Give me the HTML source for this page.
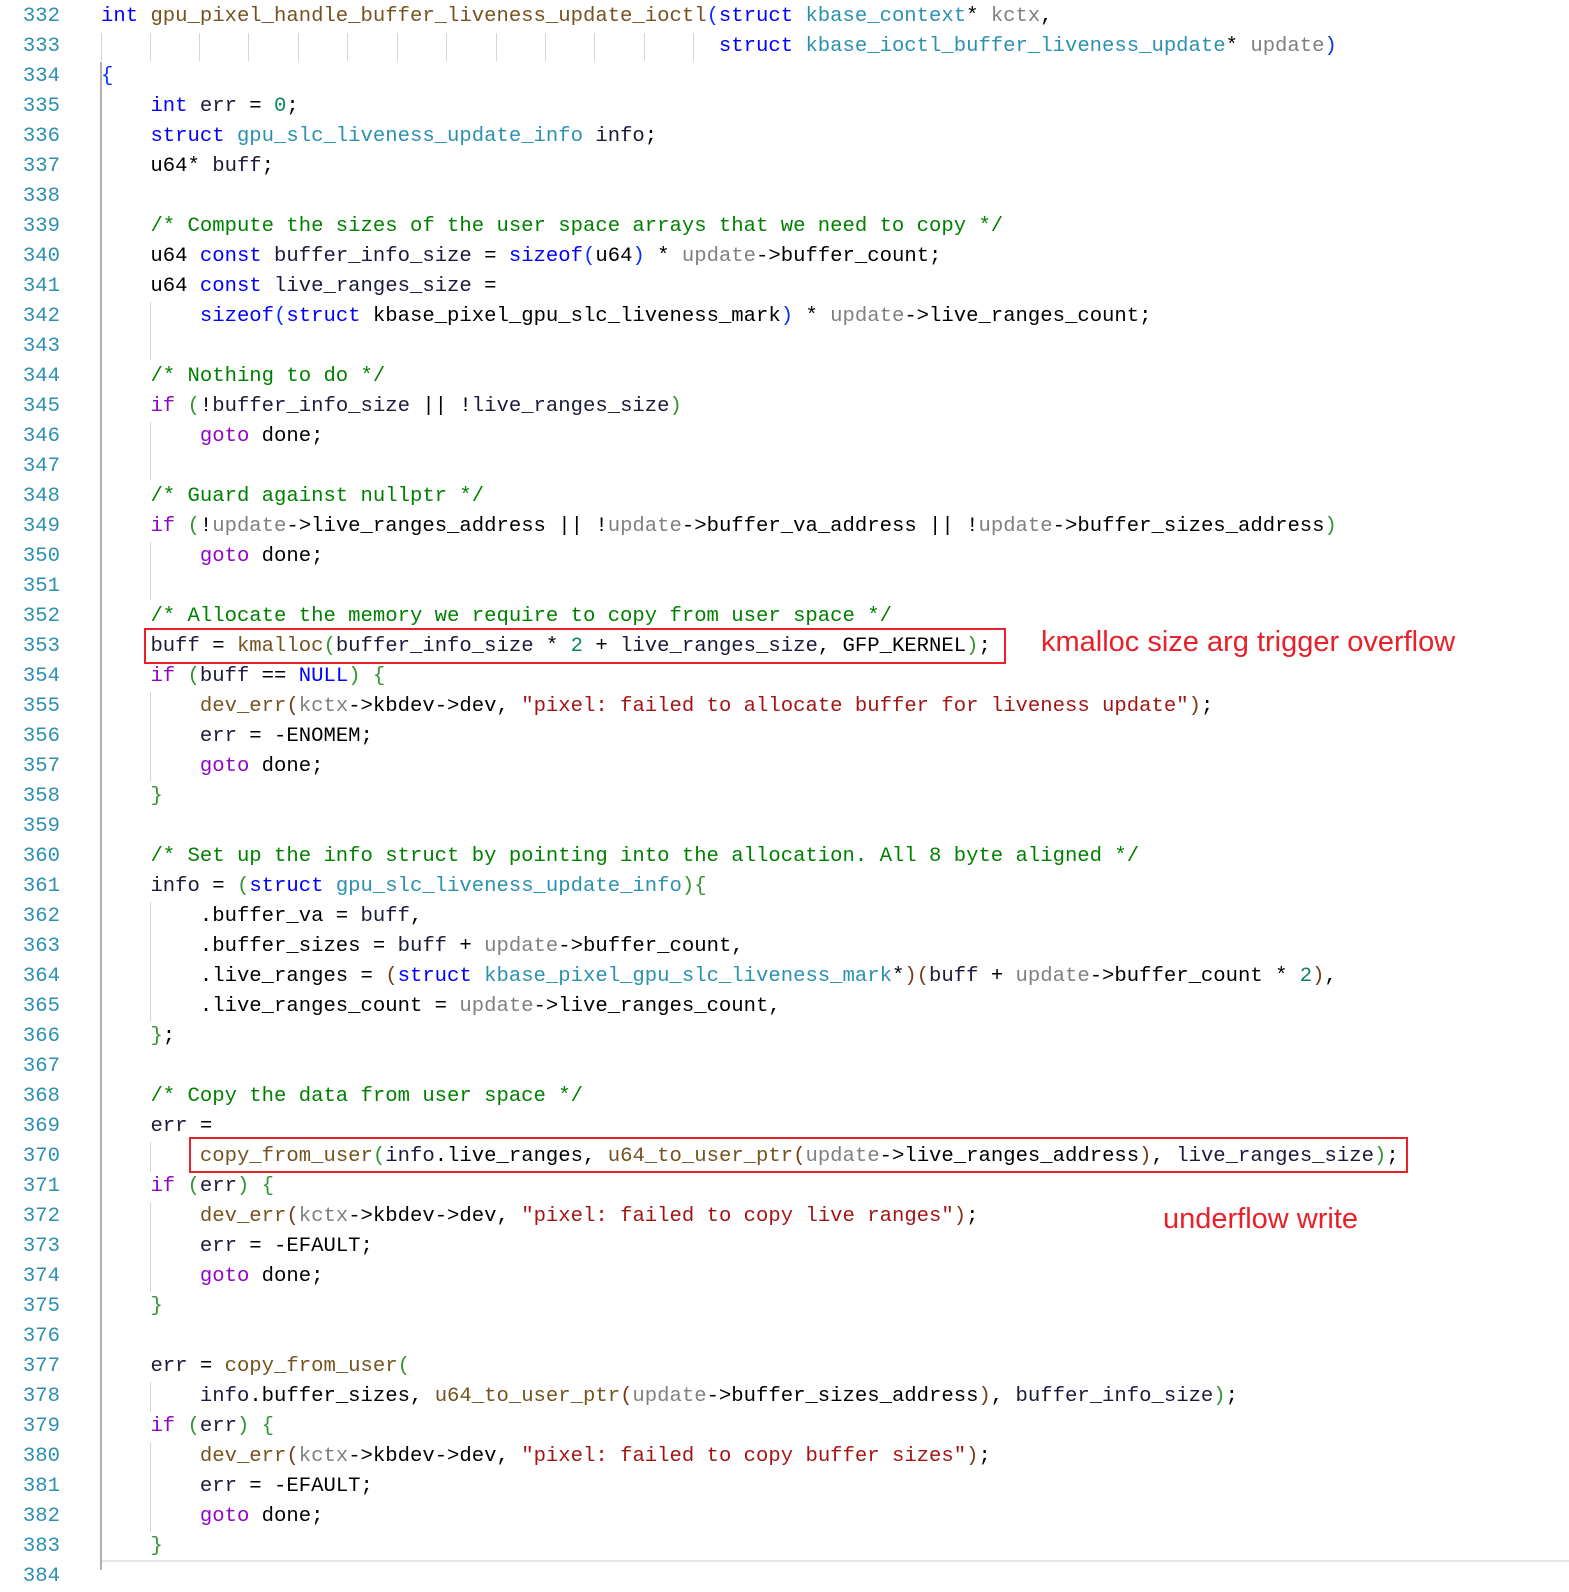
<!DOCTYPE html>
<html><head><meta charset="utf-8"><style>
body{margin:0;background:#fff;width:1569px;height:1570px;overflow:hidden;position:relative;font-family:"Liberation Mono",monospace;}
.ln{position:absolute;left:0;width:60px;text-align:right;color:#2b91af;font-size:20.6px;line-height:30px;}
.c{position:absolute;left:101px;white-space:pre;font-size:20.6px;line-height:30px;color:#000;}
.k{color:#0000ff}.cl{color:#8f08c4}.t{color:#2b91af}.f{color:#74531f}.v{color:#1a1a3a}.p{color:#808080}.m{color:#008000}.s{color:#a31515}.n{color:#098658}.b1{color:#0431fa}.b2{color:#319331}.b3{color:#7b3814}
.g{position:absolute;width:1px;background:#d6d6d6;}
.box{position:absolute;border:2px solid #e8202a;}
.ann{position:absolute;font-family:"Liberation Sans",sans-serif;color:#e8202a;font-size:29px;white-space:nowrap;}
</style></head><body>
<div style="position:absolute;left:100px;top:62px;width:2px;height:1508px;background:#b0b0b0"></div>
<div style="position:absolute;left:102px;top:1560px;width:1467px;height:2px;background:#e6e6e6"></div>
<div class="g" style="left:101px;top:33px;height:28px"></div>
<div class="g" style="left:150px;top:33px;height:28px"></div>
<div class="g" style="left:199px;top:33px;height:28px"></div>
<div class="g" style="left:248px;top:33px;height:28px"></div>
<div class="g" style="left:298px;top:33px;height:28px"></div>
<div class="g" style="left:347px;top:33px;height:28px"></div>
<div class="g" style="left:397px;top:33px;height:28px"></div>
<div class="g" style="left:446px;top:33px;height:28px"></div>
<div class="g" style="left:496px;top:33px;height:28px"></div>
<div class="g" style="left:545px;top:33px;height:28px"></div>
<div class="g" style="left:594px;top:33px;height:28px"></div>
<div class="g" style="left:644px;top:33px;height:28px"></div>
<div class="g" style="left:693px;top:33px;height:28px"></div>
<div class="g" style="left:150px;top:302px;height:58px"></div>
<div class="g" style="left:150px;top:422px;height:58px"></div>
<div class="g" style="left:150px;top:542px;height:58px"></div>
<div class="g" style="left:150px;top:692px;height:90px"></div>
<div class="g" style="left:150px;top:902px;height:120px"></div>
<div class="g" style="left:150px;top:1142px;height:30px"></div>
<div class="g" style="left:150px;top:1202px;height:90px"></div>
<div class="g" style="left:150px;top:1382px;height:30px"></div>
<div class="g" style="left:150px;top:1442px;height:90px"></div>

<div class="box" style="left:144px;top:628px;width:858px;height:32px"></div>
<div class="box" style="left:189px;top:1137px;width:1215px;height:32px"></div>
<div class="ann" style="left:1041px;top:626px">kmalloc size arg trigger overflow</div>
<div class="ann" style="left:1163px;top:1203px">underflow write</div>

<div class="ln" style="top:2px">332</div><div class="c" style="top:2px"><span class="k">int</span> <span class="f">gpu_pixel_handle_buffer_liveness_update_ioctl</span><span class="b1">(</span><span class="k">struct</span> <span class="t">kbase_context</span>* <span class="p">kctx</span>,</div>
<div class="ln" style="top:32px">333</div><div class="c" style="top:32px">                                                  <span class="k">struct</span> <span class="t">kbase_ioctl_buffer_liveness_update</span>* <span class="p">update</span><span class="b1">)</span></div>
<div class="ln" style="top:62px">334</div><div class="c" style="top:62px"><span class="b1">{</span></div>
<div class="ln" style="top:92px">335</div><div class="c" style="top:92px">    <span class="k">int</span> <span class="v">err</span> = <span class="n">0</span>;</div>
<div class="ln" style="top:122px">336</div><div class="c" style="top:122px">    <span class="k">struct</span> <span class="t">gpu_slc_liveness_update_info</span> <span class="v">info</span>;</div>
<div class="ln" style="top:152px">337</div><div class="c" style="top:152px">    u64* <span class="v">buff</span>;</div>
<div class="ln" style="top:182px">338</div>
<div class="ln" style="top:212px">339</div><div class="c" style="top:212px">    <span class="m">/* Compute the sizes of the user space arrays that we need to copy */</span></div>
<div class="ln" style="top:242px">340</div><div class="c" style="top:242px">    u64 <span class="k">const</span> <span class="v">buffer_info_size</span> = <span class="k">sizeof</span><span class="b1">(</span>u64<span class="b1">)</span> * <span class="p">update</span>-&gt;buffer_count;</div>
<div class="ln" style="top:272px">341</div><div class="c" style="top:272px">    u64 <span class="k">const</span> <span class="v">live_ranges_size</span> =</div>
<div class="ln" style="top:302px">342</div><div class="c" style="top:302px">        <span class="k">sizeof</span><span class="b1">(</span><span class="k">struct</span> kbase_pixel_gpu_slc_liveness_mark<span class="b1">)</span> * <span class="p">update</span>-&gt;live_ranges_count;</div>
<div class="ln" style="top:332px">343</div>
<div class="ln" style="top:362px">344</div><div class="c" style="top:362px">    <span class="m">/* Nothing to do */</span></div>
<div class="ln" style="top:392px">345</div><div class="c" style="top:392px">    <span class="cl">if</span> <span class="b2">(</span>!<span class="v">buffer_info_size</span> || !<span class="v">live_ranges_size</span><span class="b2">)</span></div>
<div class="ln" style="top:422px">346</div><div class="c" style="top:422px">        <span class="cl">goto</span> done;</div>
<div class="ln" style="top:452px">347</div>
<div class="ln" style="top:482px">348</div><div class="c" style="top:482px">    <span class="m">/* Guard against nullptr */</span></div>
<div class="ln" style="top:512px">349</div><div class="c" style="top:512px">    <span class="cl">if</span> <span class="b2">(</span>!<span class="p">update</span>-&gt;live_ranges_address || !<span class="p">update</span>-&gt;buffer_va_address || !<span class="p">update</span>-&gt;buffer_sizes_address<span class="b2">)</span></div>
<div class="ln" style="top:542px">350</div><div class="c" style="top:542px">        <span class="cl">goto</span> done;</div>
<div class="ln" style="top:572px">351</div>
<div class="ln" style="top:602px">352</div><div class="c" style="top:602px">    <span class="m">/* Allocate the memory we require to copy from user space */</span></div>
<div class="ln" style="top:632px">353</div><div class="c" style="top:632px">    <span class="v">buff</span> = <span class="f">kmalloc</span><span class="b2">(</span><span class="v">buffer_info_size</span> * <span class="n">2</span> + <span class="v">live_ranges_size</span>, GFP_KERNEL<span class="b2">)</span>;</div>
<div class="ln" style="top:662px">354</div><div class="c" style="top:662px">    <span class="cl">if</span> <span class="b2">(</span><span class="v">buff</span> == <span class="k">NULL</span><span class="b2">)</span> <span class="b2">{</span></div>
<div class="ln" style="top:692px">355</div><div class="c" style="top:692px">        <span class="f">dev_err</span><span class="b3">(</span><span class="p">kctx</span>-&gt;kbdev-&gt;dev, <span class="s">"pixel: failed to allocate buffer for liveness update"</span><span class="b3">)</span>;</div>
<div class="ln" style="top:722px">356</div><div class="c" style="top:722px">        <span class="v">err</span> = -ENOMEM;</div>
<div class="ln" style="top:752px">357</div><div class="c" style="top:752px">        <span class="cl">goto</span> done;</div>
<div class="ln" style="top:782px">358</div><div class="c" style="top:782px">    <span class="b2">}</span></div>
<div class="ln" style="top:812px">359</div>
<div class="ln" style="top:842px">360</div><div class="c" style="top:842px">    <span class="m">/* Set up the info struct by pointing into the allocation. All 8 byte aligned */</span></div>
<div class="ln" style="top:872px">361</div><div class="c" style="top:872px">    <span class="v">info</span> = <span class="b2">(</span><span class="k">struct</span> <span class="t">gpu_slc_liveness_update_info</span><span class="b2">){</span></div>
<div class="ln" style="top:902px">362</div><div class="c" style="top:902px">        .buffer_va = <span class="v">buff</span>,</div>
<div class="ln" style="top:932px">363</div><div class="c" style="top:932px">        .buffer_sizes = <span class="v">buff</span> + <span class="p">update</span>-&gt;buffer_count,</div>
<div class="ln" style="top:962px">364</div><div class="c" style="top:962px">        .live_ranges = <span class="b3">(</span><span class="k">struct</span> <span class="t">kbase_pixel_gpu_slc_liveness_mark</span>*<span class="b3">)(</span><span class="v">buff</span> + <span class="p">update</span>-&gt;buffer_count * <span class="n">2</span><span class="b3">)</span>,</div>
<div class="ln" style="top:992px">365</div><div class="c" style="top:992px">        .live_ranges_count = <span class="p">update</span>-&gt;live_ranges_count,</div>
<div class="ln" style="top:1022px">366</div><div class="c" style="top:1022px">    <span class="b2">}</span>;</div>
<div class="ln" style="top:1052px">367</div>
<div class="ln" style="top:1082px">368</div><div class="c" style="top:1082px">    <span class="m">/* Copy the data from user space */</span></div>
<div class="ln" style="top:1112px">369</div><div class="c" style="top:1112px">    <span class="v">err</span> =</div>
<div class="ln" style="top:1142px">370</div><div class="c" style="top:1142px">        <span class="f">copy_from_user</span><span class="b2">(</span><span class="v">info</span>.live_ranges, <span class="f">u64_to_user_ptr</span><span class="b3">(</span><span class="p">update</span>-&gt;live_ranges_address<span class="b3">)</span>, <span class="v">live_ranges_size</span><span class="b2">)</span>;</div>
<div class="ln" style="top:1172px">371</div><div class="c" style="top:1172px">    <span class="cl">if</span> <span class="b2">(</span><span class="v">err</span><span class="b2">)</span> <span class="b2">{</span></div>
<div class="ln" style="top:1202px">372</div><div class="c" style="top:1202px">        <span class="f">dev_err</span><span class="b3">(</span><span class="p">kctx</span>-&gt;kbdev-&gt;dev, <span class="s">"pixel: failed to copy live ranges"</span><span class="b3">)</span>;</div>
<div class="ln" style="top:1232px">373</div><div class="c" style="top:1232px">        <span class="v">err</span> = -EFAULT;</div>
<div class="ln" style="top:1262px">374</div><div class="c" style="top:1262px">        <span class="cl">goto</span> done;</div>
<div class="ln" style="top:1292px">375</div><div class="c" style="top:1292px">    <span class="b2">}</span></div>
<div class="ln" style="top:1322px">376</div>
<div class="ln" style="top:1352px">377</div><div class="c" style="top:1352px">    <span class="v">err</span> = <span class="f">copy_from_user</span><span class="b2">(</span></div>
<div class="ln" style="top:1382px">378</div><div class="c" style="top:1382px">        <span class="v">info</span>.buffer_sizes, <span class="f">u64_to_user_ptr</span><span class="b3">(</span><span class="p">update</span>-&gt;buffer_sizes_address<span class="b3">)</span>, <span class="v">buffer_info_size</span><span class="b2">)</span>;</div>
<div class="ln" style="top:1412px">379</div><div class="c" style="top:1412px">    <span class="cl">if</span> <span class="b2">(</span><span class="v">err</span><span class="b2">)</span> <span class="b2">{</span></div>
<div class="ln" style="top:1442px">380</div><div class="c" style="top:1442px">        <span class="f">dev_err</span><span class="b3">(</span><span class="p">kctx</span>-&gt;kbdev-&gt;dev, <span class="s">"pixel: failed to copy buffer sizes"</span><span class="b3">)</span>;</div>
<div class="ln" style="top:1472px">381</div><div class="c" style="top:1472px">        <span class="v">err</span> = -EFAULT;</div>
<div class="ln" style="top:1502px">382</div><div class="c" style="top:1502px">        <span class="cl">goto</span> done;</div>
<div class="ln" style="top:1532px">383</div><div class="c" style="top:1532px">    <span class="b2">}</span></div>
<div class="ln" style="top:1562px">384</div>
</body></html>
